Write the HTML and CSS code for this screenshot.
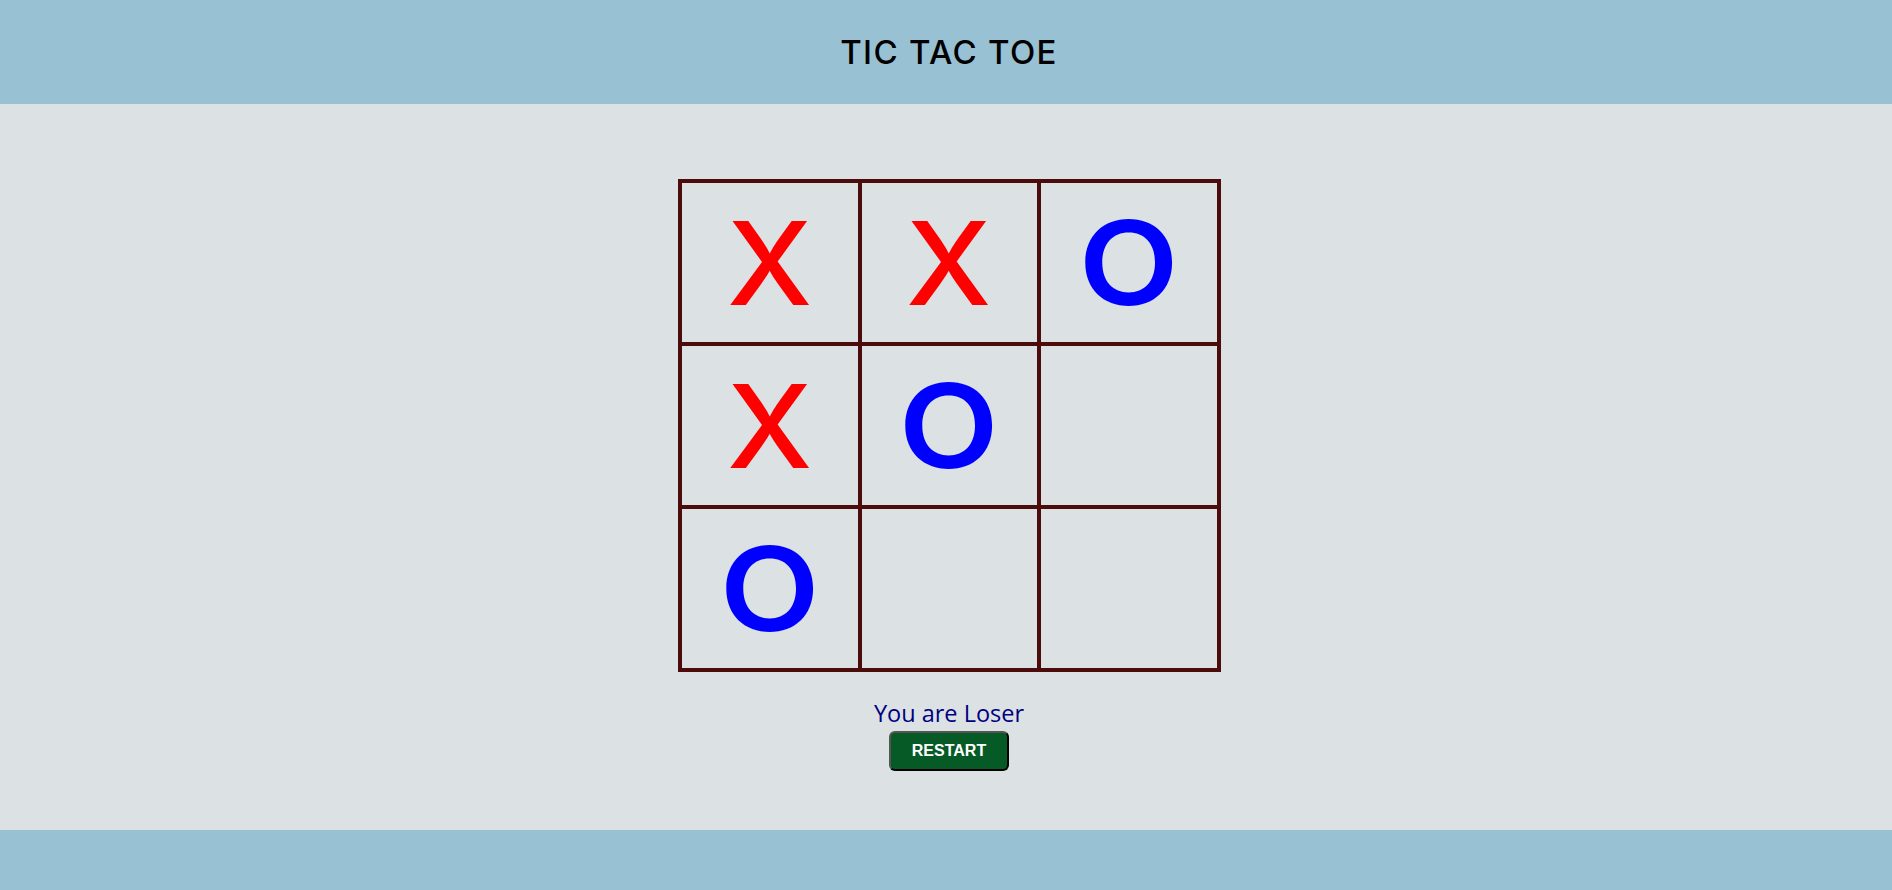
FILE: index.html
```html
<!DOCTYPE html>
<html lang="en">
<head>
<meta charset="utf-8">
<title>Tic Tac Toe</title>
<link rel="stylesheet" href="styles.css">
</head>
<body>
<header class="top-bar">
  <h1 class="title">TIC TAC TOE</h1>
</header>
<main class="game">
  <div class="board">
    <div class="cell x"><span class="mark">X</span></div>
    <div class="cell x"><span class="mark">X</span></div>
    <div class="cell o"><span class="mark">O</span></div>
    <div class="cell x"><span class="mark">X</span></div>
    <div class="cell o"><span class="mark">O</span></div>
    <div class="cell"></div>
    <div class="cell o"><span class="mark">O</span></div>
    <div class="cell"></div>
    <div class="cell"></div>
  </div>
  <p class="message">You are Loser</p>
  <button class="restart" type="button">RESTART</button>
</main>
<footer class="bottom-bar"></footer>
</body>
</html>
```
FILE: styles.css
```css
* {
  box-sizing: border-box;
}

html, body {
  margin: 0;
  padding: 0;
}

body {
  min-height: 100vh;
  display: flex;
  flex-direction: column;
  background: #dce1e4;
  font-family: "Open Sans", "Noto Sans", sans-serif;
}

.top-bar {
  height: 104px;
  background: #98c1d3;
  display: flex;
  align-items: center;
  justify-content: center;
  padding-left: 6px;
  flex-shrink: 0;
}

.title {
  margin: 0;
  font-family: Inter, "Noto Sans", sans-serif;
  font-weight: 500;
  font-size: 33px;
  line-height: 1;
  color: #000;
  letter-spacing: 1.3px;
}

.game {
  flex: 1;
  display: flex;
  flex-direction: column;
  align-items: center;
  padding-top: 75px;
  padding-left: 6px;
}

.board {
  display: grid;
  grid-template-columns: 176px 175px 176px;
  grid-template-rows: repeat(3, 159px);
  gap: 4px;
  padding: 4px;
  background: #4d0c0c;
}

.cell {
  background: #dce1e4;
  display: flex;
  align-items: center;
  justify-content: center;
  font-family: Inter, "Noto Sans", sans-serif;
  font-weight: 500;
  font-size: 116px;
  line-height: 1;
}

.mark {
  display: inline-block;
}

.cell.x {
  color: #ff0000;
}

.cell.x .mark {
  transform: scaleX(1.05);
}

.cell.o {
  color: #0000ff;
  font-weight: 600;
}

.cell.o .mark {
  transform: scaleX(1.12);
}

.message {
  margin: 25px 0 0;
  font-size: 23.5px;
  line-height: 32px;
  color: #000080;
}

.restart {
  margin-top: 2px;
  width: 120px;
  height: 40px;
  padding: 0;
  background: #055a26;
  color: #fff;
  border: 2px outset #000;
  border-radius: 6px;
  font-family: "Liberation Sans", Arial, sans-serif;
  font-weight: bold;
  font-size: 16px;
  cursor: pointer;
}

.bottom-bar {
  height: 60px;
  background: #98c1d3;
  flex-shrink: 0;
}
```
